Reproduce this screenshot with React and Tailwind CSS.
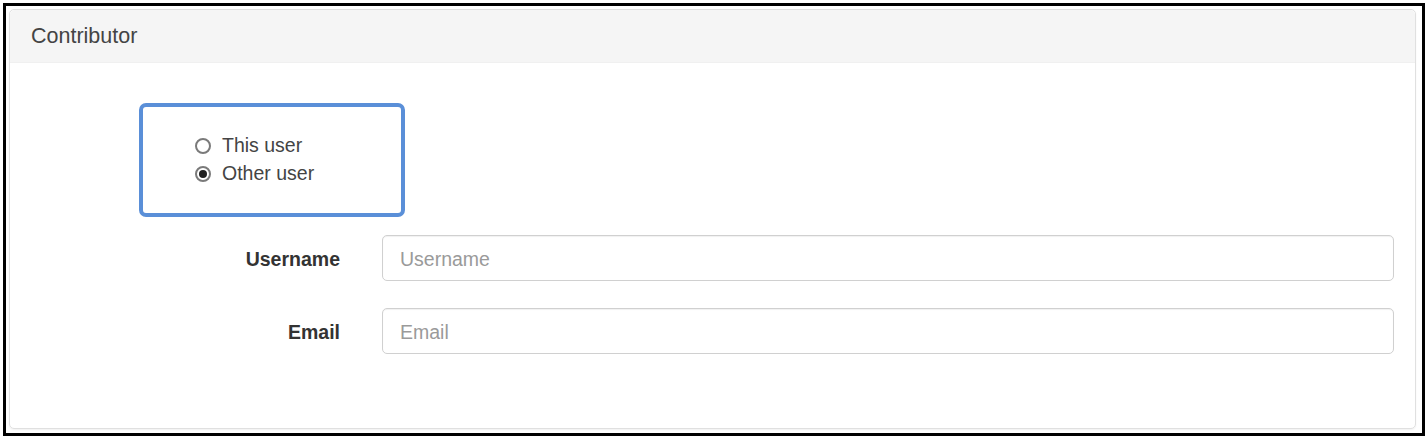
export default function App() {
  const options = [
    { label: "This user", checked: false },
    { label: "Other user", checked: true },
  ];
  const fields = ["Username", "Email"];

  return (
    <div
      className="w-[1428px] h-[440px] bg-white pl-[3px] pt-[3px] text-[#333]"
      style={{ fontFamily: '"Liberation Sans", Arial, sans-serif' }}
    >
      <div className="w-[1422px] h-[433px] border-[3px] border-black flex pl-[3px] pt-[3px] pr-[6px] pb-[4px]">
        <div className="flex-1 flex flex-col border border-[#e0e0e0] rounded-[5px] shadow-[0_1px_2px_rgba(0,0,0,0.06)]">
          <div className="h-[53px] bg-[#f5f5f5] border-b border-[#f0f0f0] px-[21px] flex items-center rounded-t-[5px]">
            <span className="text-[21.5px] text-[#444]">Contributor</span>
          </div>

          <div className="flex-1 flex flex-col pt-[40px]">
            <div className="ml-[129px] w-[266px] h-[114px] border-[4px] border-[#5a8fd8] rounded-[7px] pl-[52px] pt-[25px]">
              {options.map((o) => (
                <label key={o.label} className="h-[28px] flex items-center gap-[11px] text-[19.5px] text-[#444]">
                  <span className="shrink-0 w-[16px] h-[16px] rounded-full border-2 border-[#7a7a7a] bg-white flex items-center justify-center">
                    {o.checked && <span className="w-[8px] h-[8px] rounded-full bg-[#1f1f1f]" />}
                  </span>
                  {o.label}
                </label>
              ))}
            </div>

            <div className="mt-[18px] flex flex-col gap-[27px] pr-[21px]">
              {fields.map((f) => (
                <div key={f} className="flex items-center">
                  <span className="w-[330px] pt-[4px] text-right font-bold text-[19.5px] text-[#333]">{f}</span>
                  <input
                    placeholder={f}
                    className="ml-[42px] flex-1 h-[46px] border border-[#d0d0d0] rounded-[5px] px-[17px] pt-[2px] text-[19.5px] outline-none placeholder:text-[#9a9a9a] shadow-[inset_0_1px_1px_rgba(0,0,0,0.06)]"
                  />
                </div>
              ))}
            </div>
          </div>
        </div>
      </div>
    </div>
  );
}
